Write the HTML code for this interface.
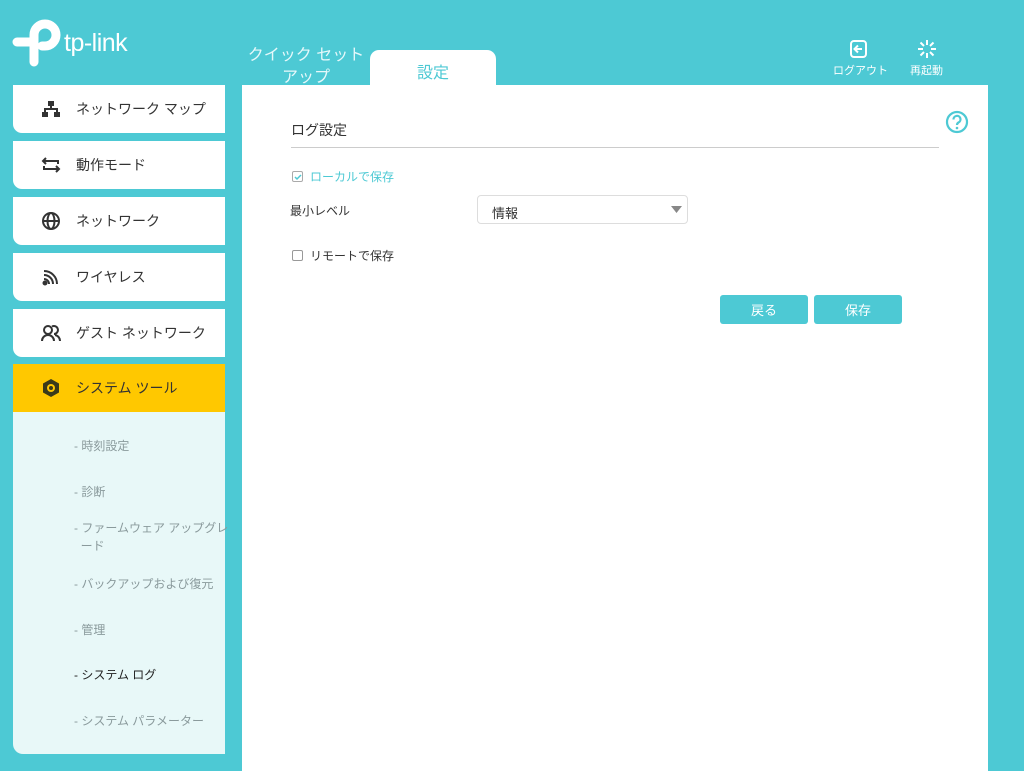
<!DOCTYPE html>
<html><head><meta charset="utf-8"><style>
*{margin:0;padding:0;box-sizing:border-box}
body{width:1024px;height:771px;background:#4dc9d4;font-family:"Liberation Sans","Noto Sans CJK JP",sans-serif;position:relative;overflow:hidden}
.abs{position:absolute}
.item{position:absolute;left:13px;width:212px;height:48px;background:#fff;border-bottom-left-radius:9px;font-size:14px;color:#333;}
.item .ic{position:absolute;left:28px;top:14px;width:20px;height:20px}
.item span{position:absolute;left:63px;top:14px;white-space:nowrap}
.sub{position:absolute;left:74px;font-size:12px;color:#8a9a9c;white-space:nowrap}
</style></head><body>
<!-- logo -->
<svg class="abs" style="left:12px;top:18px" width="52" height="50" viewBox="0 0 52 50">
<path d="M5 24 H22 M22 44 V17 a11 11 0 1 1 11 11 H30" fill="none" stroke="#fff" stroke-width="9" stroke-linecap="round"/>
</svg>
<div class="abs" style="left:64px;top:29px;color:#fff;font-size:25px;letter-spacing:-0.5px">tp-link</div>
<div class="abs" style="left:246px;top:45px;color:#e6f8fa;font-size:16px;line-height:22px;text-align:center;width:120px">クイック セット<br>アップ</div>
<div class="abs" style="left:370px;top:50px;width:126px;height:40px;background:#fff;border-radius:9px 9px 0 0;color:#4dc9d4;font-size:16px;text-align:center;padding-top:9px">設定</div>
<!-- top right -->
<svg class="abs" style="left:849px;top:39px" width="20" height="20" viewBox="0 0 20 20"><rect x="2" y="2" width="15" height="16" rx="3" fill="none" stroke="#fff" stroke-width="2"/><path d="M6 10 h7 M9 6.5 l-3.5 3.5 3.5 3.5" stroke="#fff" stroke-width="2" fill="none"/></svg>
<div class="abs" style="left:833px;top:62px;color:#fff;font-size:11px">ログアウト</div>
<svg class="abs" style="left:916px;top:38px" width="22" height="22" viewBox="0 0 22 22" stroke="#fff" stroke-width="2"><path d="M11 2v5M11 15v5M2 11h5M15 11h5M4.5 4.5l3.5 3.5M14 14l3.5 3.5M17.5 4.5L14 8M8 14l-3.5 3.5"/></svg>
<div class="abs" style="left:910px;top:62px;color:#fff;font-size:11px">再起動</div>
<!-- main panel -->
<div class="abs" style="left:242px;top:85px;width:746px;height:686px;background:#fff"></div>
<svg class="abs" style="left:945px;top:110px" width="24" height="24" viewBox="0 0 24 24"><circle cx="12" cy="12" r="10" fill="none" stroke="#4dc9d4" stroke-width="2.2"/><path d="M8.5 9.5 a3.5 3.5 0 1 1 5 3 c-1.2 .7 -1.5 1.3 -1.5 2.5" fill="none" stroke="#4dc9d4" stroke-width="2.2"/><circle cx="12" cy="18" r="1.3" fill="#4dc9d4"/></svg>
<div class="abs" style="left:291px;top:120px;font-size:14px;color:#333">ログ設定</div>
<div class="abs" style="left:291px;top:147px;width:648px;height:1px;background:#ccc"></div>
<div class="abs" style="left:292px;top:171px;width:11px;height:11px;border:1px solid #aaa;border-radius:2px"></div>
<svg class="abs" style="left:294px;top:173px" width="8" height="8" viewBox="0 0 8 8"><path d="M1 4 l2 2 4-4" stroke="#4dc9d4" stroke-width="1.5" fill="none"/></svg>
<div class="abs" style="left:310px;top:168px;font-size:12px;color:#4dc9d4">ローカルで保存</div>
<div class="abs" style="left:290px;top:202px;font-size:12px;color:#333">最小レベル</div>
<div class="abs" style="left:477px;top:195px;width:211px;height:29px;border:1px solid #ddd;border-radius:4px;font-size:13px;color:#333;padding:7px 0 0 14px">情報</div>
<svg class="abs" style="left:671px;top:206px" width="11" height="7"><path d="M0 0h11L5.5 7z" fill="#888"/></svg>
<div class="abs" style="left:292px;top:250px;width:11px;height:11px;border:1px solid #999;border-radius:2px"></div>
<div class="abs" style="left:310px;top:247px;font-size:12px;color:#333">リモートで保存</div>
<div class="abs" style="left:720px;top:295px;width:88px;height:29px;background:#4dc9d4;border-radius:3px;color:#fff;font-size:13px;text-align:center;line-height:31px">戻る</div>
<div class="abs" style="left:814px;top:295px;width:88px;height:29px;background:#4dc9d4;border-radius:3px;color:#fff;font-size:13px;text-align:center;line-height:31px">保存</div>
<!-- sidebar -->
<div class="item" style="top:85px"><svg class="ic" viewBox="0 0 20 20" fill="#333"><rect x="7" y="2" width="6" height="5"/><rect x="9" y="7" width="2" height="3"/><rect x="3" y="9" width="14" height="2"/><rect x="3" y="9" width="2" height="4"/><rect x="15" y="9" width="2" height="4"/><rect x="1" y="13" width="6" height="5"/><rect x="13" y="13" width="6" height="5"/></svg><span>ネットワーク マップ</span></div>
<div class="item" style="top:141px"><svg class="ic" viewBox="0 0 20 20" fill="none" stroke="#333" stroke-width="2"><path d="M5 3 L2 6 L5 9 M2 6 H17 V9 M15 11 L18 14 L15 17 M18 14 H3 V11"/></svg><span>動作モード</span></div>
<div class="item" style="top:197px"><svg class="ic" viewBox="0 0 20 20" fill="none" stroke="#333" stroke-width="2"><circle cx="10" cy="10" r="8"/><ellipse cx="10" cy="10" rx="3.5" ry="8"/><path d="M2 10h16"/></svg><span>ネットワーク</span></div>
<div class="item" style="top:253px"><svg class="ic" viewBox="0 0 20 20" fill="none" stroke="#333" stroke-width="2"><path d="M3 4 a13 13 0 0 1 13 13 M3 8 a9 9 0 0 1 9 9 M3 12 a5 5 0 0 1 5 5"/><circle cx="4" cy="16" r="1.5" fill="#333"/></svg><span>ワイヤレス</span></div>
<div class="item" style="top:309px"><svg class="ic" viewBox="0 0 20 20" fill="none" stroke="#333" stroke-width="2"><circle cx="7" cy="7" r="4"/><path d="M1 18 a6 6 0 0 1 12 0"/><path d="M11 3.5 a4 4 0 1 1 2 7.5 M14 12 a6 6 0 0 1 5 6"/></svg><span>ゲスト ネットワーク</span></div>
<div class="item" style="top:364px;background:#ffc800;border-bottom-left-radius:0;height:48px"><svg class="ic" viewBox="0 0 20 20"><path d="M10 1 L18 5.5 V14.5 L10 19 L2 14.5 V5.5Z" fill="#3a3a1a"/><circle cx="10" cy="10" r="4" fill="#ffc800"/><circle cx="10" cy="10" r="2" fill="#3a3a1a"/></svg><span>システム ツール</span></div>
<div class="abs" style="left:13px;top:412px;width:212px;height:342px;background:#e8f8f8;border-bottom-left-radius:10px"></div>
<div class="sub" style="top:437px">- 時刻設定</div>
<div class="sub" style="top:483px">- 診断</div>
<div class="sub" style="top:519px;line-height:18px">- ファームウェア アップグレ<br>&nbsp;&nbsp;ード</div>
<div class="sub" style="top:575px">- バックアップおよび復元</div>
<div class="sub" style="top:621px">- 管理</div>
<div class="sub" style="top:666px;color:#222">- システム ログ</div>
<div class="sub" style="top:712px">- システム パラメーター</div>
</body></html>
